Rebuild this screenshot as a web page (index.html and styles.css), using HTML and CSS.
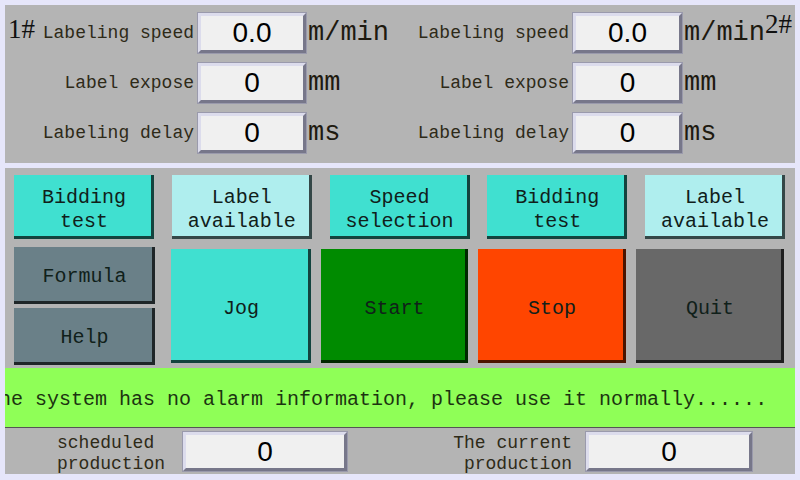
FILE: index.html
```html
<!DOCTYPE html>
<html lang="en">
<head>
    <meta charset="UTF-8">
    <meta name="viewport" content="width=device-width, initial-scale=1.0">
    <title>Labeling machine</title>
    <link rel="stylesheet" href="styles.css">
</head>
<body>

    <div class="screen">
        <!-- Parameter panel for head 1# and 2# -->
        <div class="panel params">
            <div class="param-label first"><span class="head-tag">1#</span><span>Labeling speed</span></div>
            <div class="value-box">0.0</div>
            <div class="unit">m/min</div>
            <div class="param-label">Labeling speed</div>
            <div class="value-box">0.0</div>
            <div class="unit last"><span>m/min</span><span class="head-tag tag-right">2#</span></div>

            <div class="param-label">Label expose</div>
            <div class="value-box">0</div>
            <div class="unit">mm</div>
            <div class="param-label">Label expose</div>
            <div class="value-box">0</div>
            <div class="unit">mm</div>

            <div class="param-label">Labeling delay</div>
            <div class="value-box">0</div>
            <div class="unit">ms</div>
            <div class="param-label">Labeling delay</div>
            <div class="value-box">0</div>
            <div class="unit">ms</div>
        </div>

        <!-- Buttons -->
        <div class="panel controls">
            <div class="btn-row">
                <div class="btn small turquoise">Bidding<br>test</div>
                <div class="btn small pale">Label<br>available</div>
                <div class="btn small turquoise">Speed<br>selection</div>
                <div class="btn small turquoise">Bidding<br>test</div>
                <div class="btn small pale">Label<br>available</div>
            </div>
            <div class="btn-row big-row">
                <div class="side-col">
                    <div class="btn slate">Formula</div>
                    <div class="btn slate">Help</div>
                </div>
                <div class="btn big turquoise jog">Jog</div>
                <div class="btn big start">Start</div>
                <div class="btn big stop">Stop</div>
                <div class="btn big quit">Quit</div>
            </div>
        </div>

        <!-- Alarm marquee -->
        <div class="alarm">
            <span class="alarm-text">The system has no alarm information, please use it normally......</span>
        </div>

        <!-- Production counters -->
        <div class="panel production">
            <div class="prod-label">scheduled<br>production</div>
            <div class="value-box prod-box">0</div>
            <div class="prod-label right">The current<br>production</div>
            <div class="value-box prod-box wide">0</div>
        </div>
    </div>

</body>
</html>
```
FILE: styles.css
```css
/* Basic Reset */
* {
    margin: 0;
    padding: 0;
    box-sizing: border-box;
}

body {
    width: 800px;
    height: 480px;
    background: #e6e6fa;
    font-family: 'Liberation Mono', monospace;
    color: #2e2a18;
    overflow: hidden;
}

.screen {
    padding: 5px 5px 0 5px;
    display: flex;
    flex-direction: column;
}

.panel {
    background: #b4b4b4;
}

/* Parameter panel */
.params {
    height: 158px;
    padding: 8px 0 10px 0;
    display: grid;
    grid-template-columns: 193px 108px 84px 183px 109px 1fr;
    grid-template-rows: repeat(3, 40px);
    row-gap: 10px;
    align-items: center;
}

.param-label {
    font-size: 18px;
    text-align: right;
    padding-right: 4px;
    white-space: nowrap;
}

.param-label.first {
    display: flex;
    justify-content: space-between;
    align-items: center;
}

.head-tag {
    font-family: 'Liberation Serif', serif;
    font-size: 27px;
    color: #111;
    align-self: flex-start;
    margin-top: -7px;
    padding-left: 3px;
}

.tag-right {
    padding-left: 0;
    margin-top: -9px;
}

.unit {
    font-size: 27px;
    padding-left: 2px;
    white-space: nowrap;
    color: #1e1a10;
}

.unit.last {
    display: flex;
    align-items: center;
}

.value-box {
    height: 40px;
    background: #f0f0f0;
    border: 3px solid;
    border-color: #dcdcec #77778a #77778a #dcdcec;
    box-shadow: 0 0 0 1px #9a9aac;
    font-family: 'Liberation Sans', sans-serif;
    font-size: 28px;
    color: #000;
    display: flex;
    align-items: center;
    justify-content: center;
}

/* Button panel */
.controls {
    margin-top: 5px;
    height: 200px;
    padding: 7px 10px 0 9px;
    display: flex;
    flex-direction: column;
    gap: 8px;
}

.btn-row {
    display: flex;
    justify-content: space-between;
}

.big-row {
    justify-content: flex-start;
    align-items: flex-start;
    gap: 10px;
}

.btn {
    font-size: 20px;
    line-height: 24px;
    color: #10201a;
    text-align: center;
    display: flex;
    align-items: center;
    justify-content: center;
    box-shadow: inset -3px -3px 0 rgba(0, 0, 0, 0.7);
}

.small {
    width: 140px;
    height: 64px;
    padding-top: 5px;
}

.side-col {
    width: 141px;
    margin-right: 6px;
    display: flex;
    flex-direction: column;
    gap: 4px;
}

.side-col .btn {
    height: 57px;
    padding-top: 3px;
}

.big {
    height: 114px;
    margin-top: 2px;
    padding-top: 5px;
}

.jog { width: 140px; }
.start { width: 147px; }
.stop { width: 148px; }
.quit { width: 148px; }

.turquoise { background: #40e0d0; }
.pale { background: #afeeee; }
.slate { background: #6a8088; }
.start { background: #008b00; }
.stop { background: #ff4500; }
.quit { background: #686868; }

/* Alarm marquee */
.alarm {
    height: 60px;
    padding-top: 3px;
    background: #8fff57;
    border-bottom: 1px solid #555;
    overflow: hidden;
    display: flex;
    align-items: center;
}

.alarm-text {
    font-size: 20px;
    color: #1c3410;
    white-space: nowrap;
    margin-left: -18px;
}

/* Production counters */
.production {
    height: 46px;
    padding-left: 52px;
    display: flex;
    align-items: center;
}

.prod-label {
    width: 126px;
    font-size: 18px;
    line-height: 21px;
    white-space: nowrap;
    padding-top: 5px;
}

.prod-label.right {
    width: 120px;
    text-align: right;
    margin-left: 105px;
    margin-right: 14px;
}

.prod-box {
    width: 164px;
    height: 39px;
    margin-top: 1px;
}

.prod-box.wide {
    width: 166px;
}
```
